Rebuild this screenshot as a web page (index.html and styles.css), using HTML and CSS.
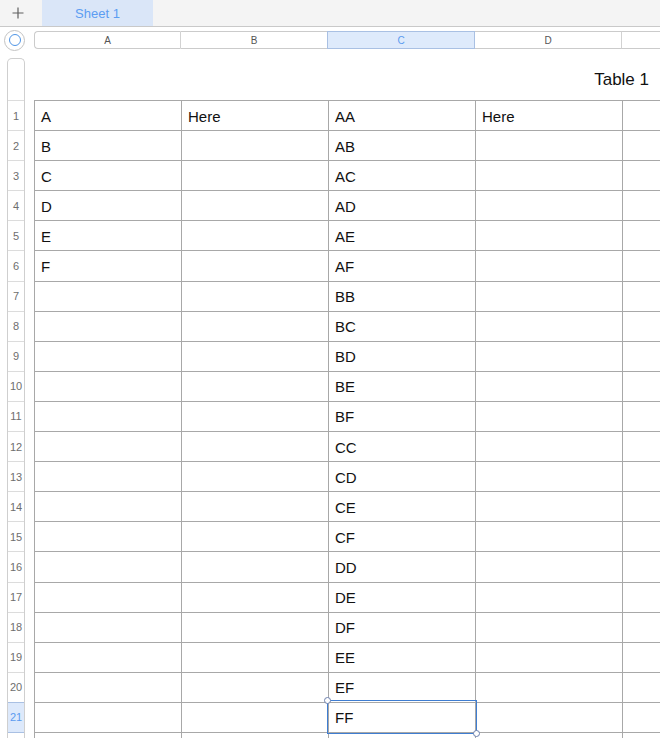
FILE: index.html
```html
<!DOCTYPE html>
<html>
<head>
<meta charset="utf-8">
<link rel="stylesheet" href="styles.css">
</head>
<body>
<div class="tabbar">
  <div class="addbtn">
    <svg width="12" height="12" viewBox="0 0 12 12"><path d="M6 0.5V11.5M0.5 6H11.5" stroke="#5f5f5f" stroke-width="1.2" fill="none"/></svg>
  </div>
  <div class="tab">Sheet 1</div>
</div>
<div class="colbar">
  <div class="corner"><div class="circle"><div class="ring"></div></div></div>
  <div class="colheads">
    <div class="ch first">A</div>
    <div class="ch">B</div>
    <div class="ch active">C</div>
    <div class="ch">D</div>
    <div class="ch"></div>
  </div>
</div>
<div class="main">
  <div class="rowheads">
    <div class="rh spacer"></div>
    <div class="rh">1</div><div class="rh">2</div><div class="rh">3</div><div class="rh">4</div><div class="rh">5</div>
    <div class="rh">6</div><div class="rh">7</div><div class="rh">8</div><div class="rh">9</div><div class="rh">10</div>
    <div class="rh">11</div><div class="rh">12</div><div class="rh">13</div><div class="rh">14</div><div class="rh">15</div>
    <div class="rh">16</div><div class="rh">17</div><div class="rh">18</div><div class="rh">19</div><div class="rh">20</div>
    <div class="rh active">21</div><div class="rh"></div>
  </div>
  <div class="sheet">
    <div class="title">Table 1</div>
    <div class="grid">
      <div class="c">A</div><div class="c">Here</div><div class="c">AA</div><div class="c">Here</div><div class="c"></div>
      <div class="c">B</div><div class="c"></div><div class="c">AB</div><div class="c"></div><div class="c"></div>
      <div class="c">C</div><div class="c"></div><div class="c">AC</div><div class="c"></div><div class="c"></div>
      <div class="c">D</div><div class="c"></div><div class="c">AD</div><div class="c"></div><div class="c"></div>
      <div class="c">E</div><div class="c"></div><div class="c">AE</div><div class="c"></div><div class="c"></div>
      <div class="c">F</div><div class="c"></div><div class="c">AF</div><div class="c"></div><div class="c"></div>
      <div class="c"></div><div class="c"></div><div class="c">BB</div><div class="c"></div><div class="c"></div>
      <div class="c"></div><div class="c"></div><div class="c">BC</div><div class="c"></div><div class="c"></div>
      <div class="c"></div><div class="c"></div><div class="c">BD</div><div class="c"></div><div class="c"></div>
      <div class="c"></div><div class="c"></div><div class="c">BE</div><div class="c"></div><div class="c"></div>
      <div class="c"></div><div class="c"></div><div class="c">BF</div><div class="c"></div><div class="c"></div>
      <div class="c"></div><div class="c"></div><div class="c">CC</div><div class="c"></div><div class="c"></div>
      <div class="c"></div><div class="c"></div><div class="c">CD</div><div class="c"></div><div class="c"></div>
      <div class="c"></div><div class="c"></div><div class="c">CE</div><div class="c"></div><div class="c"></div>
      <div class="c"></div><div class="c"></div><div class="c">CF</div><div class="c"></div><div class="c"></div>
      <div class="c"></div><div class="c"></div><div class="c">DD</div><div class="c"></div><div class="c"></div>
      <div class="c"></div><div class="c"></div><div class="c">DE</div><div class="c"></div><div class="c"></div>
      <div class="c"></div><div class="c"></div><div class="c">DF</div><div class="c"></div><div class="c"></div>
      <div class="c"></div><div class="c"></div><div class="c">EE</div><div class="c"></div><div class="c"></div>
      <div class="c"></div><div class="c"></div><div class="c">EF</div><div class="c"></div><div class="c"></div>
      <div class="c"></div><div class="c"></div><div class="c selected">FF<div class="sel"><span class="handle tl"></span><span class="handle br"></span></div></div><div class="c"></div><div class="c"></div>
      <div class="c"></div><div class="c"></div><div class="c"></div><div class="c"></div><div class="c"></div>
    </div>
  </div>
</div>
</body>
</html>
```
FILE: styles.css
```css
html, body {
  margin: 0;
  padding: 0;
  background: #ffffff;
}
body {
  width: 660px;
  height: 738px;
  overflow: hidden;
  font-family: "Liberation Sans", Arial, sans-serif;
  color: #111;
}
.tabbar {
  display: flex;
  height: 26px;
  background: #f4f4f4;
  border-bottom: 1px solid #c9c9c9;
}
.addbtn {
  width: 42px;
  flex: none;
  display: flex;
  align-items: center;
  justify-content: center;
  padding-right: 6px;
  box-sizing: border-box;
}
.addbtn svg { display: block; }
.tab {
  width: 111px;
  flex: none;
  background: #dae6f8;
  color: #5c9df2;
  font-size: 13px;
  display: flex;
  align-items: center;
  justify-content: center;
}
.colbar {
  display: flex;
  align-items: center;
  margin-top: 4px;
  height: 18px;
}
.corner {
  width: 34px;
  height: 18px;
  flex: none;
  display: flex;
  align-items: center;
}
.circle {
  margin-left: 4px;
  width: 21px;
  height: 21px;
  flex: none;
  box-sizing: border-box;
  border: 1px solid #c3c3c3;
  border-radius: 50%;
  background: #fff;
  display: flex;
  align-items: center;
  justify-content: center;
}
.ring {
  width: 12px;
  height: 12px;
  flex: none;
  box-sizing: border-box;
  border: 1.8px solid #4f95e6;
  border-radius: 50%;
}
.colheads {
  display: flex;
  height: 18px;
  flex: none;
}
.ch {
  width: 147px;
  height: 18px;
  box-sizing: border-box;
  border-top: 1px solid #cbcbcb;
  border-bottom: 1px solid #cbcbcb;
  border-right: 1px solid #d2d2d2;
  font-size: 10px;
  color: #555;
  display: flex;
  align-items: center;
  justify-content: center;
  flex: none;
}
.ch.first {
  border-left: 1px solid #cbcbcb;
  border-radius: 4px 0 0 4px;
}
.ch.active {
  width: 148px;
  margin-left: -1px;
  border: 1px solid #a9c0e3;
  background: #deeafb;
  color: #5b9bf0;
}
.main {
  display: flex;
  align-items: flex-start;
}
.rowheads {
  margin-left: 7px;
  margin-top: 9px;
  width: 18px;
  box-sizing: border-box;
  border: 1px solid #cfcfcf;
  border-bottom: none;
  border-radius: 5px 5px 0 0;
  flex: none;
}
.rh {
  height: 30.1px;
  box-sizing: border-box;
  border-bottom: 1px solid #dcdcdc;
  font-size: 11px;
  color: #6e6e6e;
  display: flex;
  align-items: center;
  justify-content: center;
}
.rh.spacer {
  height: 42px;
}
.rh.active {
  background: #dde9fb;
  color: #5b9bf0;
  border-top: 1px solid #a9c0e3;
  border-bottom: 1px solid #a9c0e3;
  margin-top: -1px;
  height: 31.1px;
}
.sheet {
  margin-left: 9px;
  flex: 1;
  min-width: 0;
}
.title {
  height: 51px;
  box-sizing: border-box;
  padding-top: 21px;
  padding-right: 11px;
  line-height: 20px;
  font-size: 17px;
  text-align: right;
  color: #111;
}
.grid {
  display: grid;
  grid-template-columns: repeat(5, 147px);
  grid-auto-rows: 30.1px;
  border-top: 1px solid #a8a8a8;
  border-left: 1px solid #a8a8a8;
  width: max-content;
}
.c {
  box-sizing: border-box;
  border-right: 1px solid #a8a8a8;
  border-bottom: 1px solid #a8a8a8;
  font-size: 15px;
  padding-left: 6px;
  padding-top: 1px;
  display: flex;
  align-items: center;
  color: #111;
}
.c.selected {
  position: relative;
}
.sel {
  position: absolute;
  top: -3px;
  left: -2px;
  right: -2px;
  bottom: -2px;
  border: 1px solid #3f7dd1;
}
.handle {
  position: absolute;
  width: 7px;
  height: 7px;
  box-sizing: border-box;
  border: 1px solid #6c80ad;
  border-radius: 50%;
  background: #fff;
}
.handle.tl { left: -4px; top: -4px; }
.handle.br { right: -4px; bottom: -4px; }
```
